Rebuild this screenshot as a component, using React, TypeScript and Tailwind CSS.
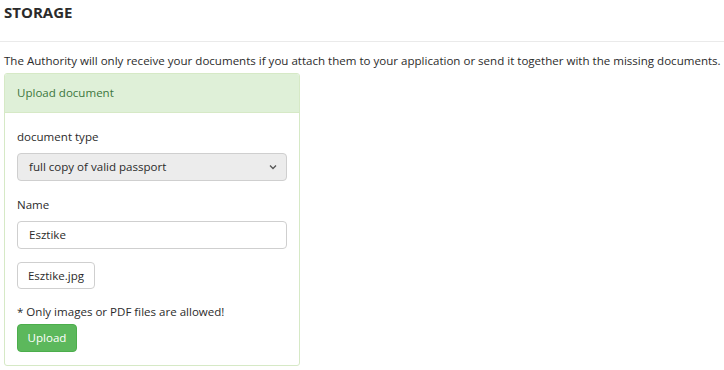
import React from "react";

export default function App() {
  return (
    <div
      className="w-[724px] h-[370px] bg-white text-[#2b2b2b] overflow-hidden"
      style={{ fontFamily: '"Open Sans", "Noto Sans", sans-serif' }}
    >
      <h2 className="pl-[4px] mt-[1px] text-[15px] leading-[22px] font-bold">STORAGE</h2>
      <div className="mt-[18px] h-px bg-[#eaeaea]" />
      <p className="pl-[4px] mt-[10px] text-[11.55px] leading-[18px] whitespace-nowrap">
        The Authority will only receive your documents if you attach them to your application or send it together with the missing documents.
      </p>
      <div className="ml-[4px] mt-[3px] w-[296px] border border-[#d6e9c6] rounded-[3px] text-[11.55px] leading-[18px]">
        <div className="bg-[#dff0d8] text-[#3c763d] px-[12px] py-[10px] border-b border-[#d6e9c6] rounded-t-[2px]">
          Upload document
        </div>
        <div className="px-[12px] pt-[15px] pb-[13px] flex flex-col">
          <label className="block">document type</label>
          <div className="mt-[7px] h-[28px] w-[270px] border border-[#cfcfcf] rounded-[4px] bg-[#ececec] flex items-center justify-between pl-[11px] pr-[8px]">
            <span>full copy of valid passport</span>
            <svg width="10" height="10" viewBox="0 0 10 10">
              <path d="M2 3.5 L5 6.5 L8 3.5" fill="none" stroke="#555" strokeWidth="1.3" />
            </svg>
          </div>
          <label className="block mt-[15px]">Name</label>
          <div className="mt-[7px] h-[28px] w-[270px] border border-[#cfcfcf] rounded-[4px] bg-white flex items-center pl-[11px]">
            Esztike
          </div>
          <div className="mt-[13px] self-start h-[27px] w-[78px] border border-[#cfcfcf] rounded-[4px] bg-white flex items-center justify-center">
            Esztike.jpg
          </div>
          <div className="mt-[14px]">* Only images or PDF files are allowed!</div>
          <div className="mt-[3px] self-start h-[28px] w-[60px] rounded-[4px] bg-[#5cb85c] border border-[#4cae4c] text-white flex items-center justify-center">
            Upload
          </div>
        </div>
      </div>
    </div>
  );
}
